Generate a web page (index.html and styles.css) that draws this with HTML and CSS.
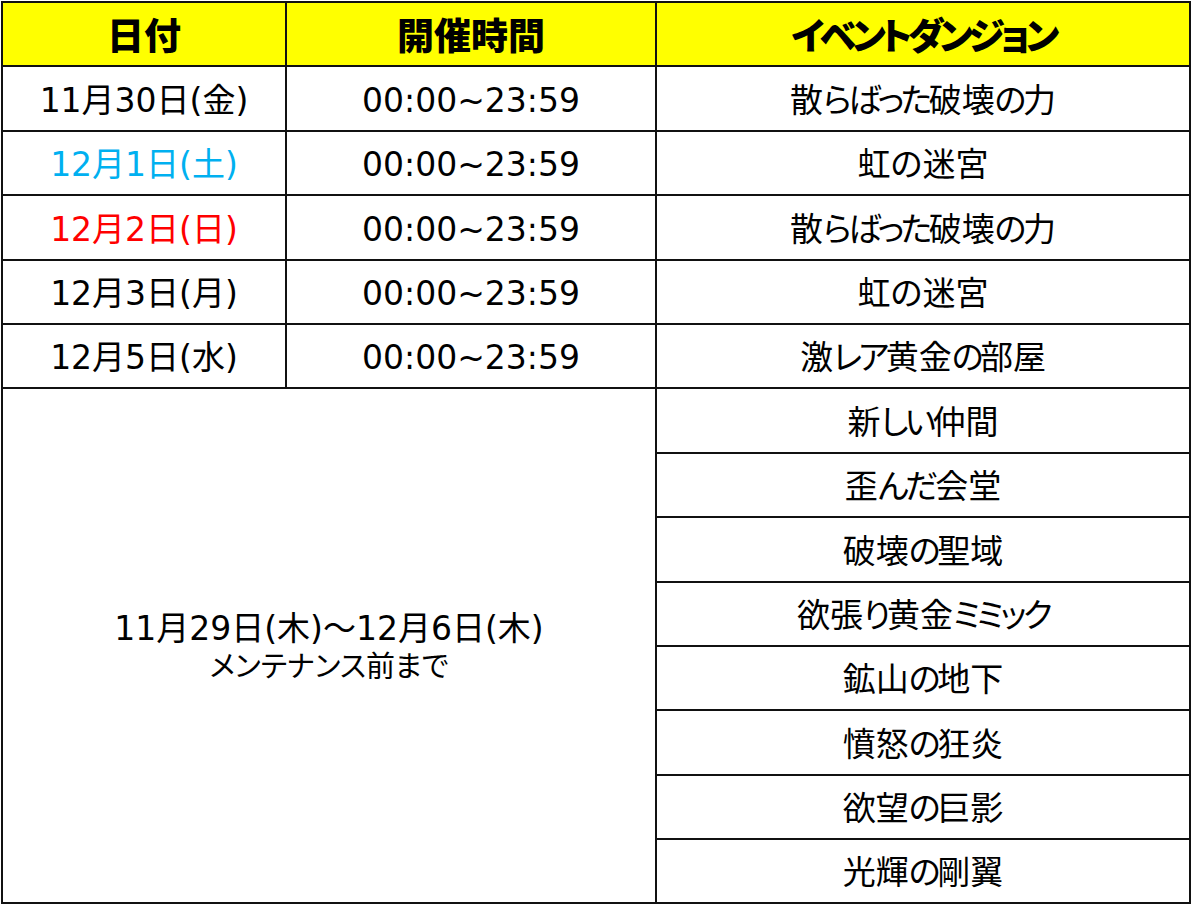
FILE: index.html
```html
<!DOCTYPE html>
<html lang="ja">
<head>
<meta charset="utf-8">
<title>イベントダンジョン スケジュール</title>
<link rel="stylesheet" href="styles.css">
</head>
<body>
<table class="schedule">
  <colgroup>
    <col class="c-date">
    <col class="c-time">
    <col class="c-event">
  </colgroup>
  <thead>
    <tr><th>日付</th><th>開催時間</th><th class="kana-head">イベントダンジョン</th></tr>
  </thead>
  <tbody>
    <tr><td>11月30日(金)</td><td>00:00~23:59</td><td>散<span class="kana">らばった</span>破壊<span class="kana">の</span>力</td></tr>
    <tr><td class="sat">12月1日(土)</td><td>00:00~23:59</td><td>虹の迷宮</td></tr>
    <tr><td class="sun">12月2日(日)</td><td>00:00~23:59</td><td>散<span class="kana">らばった</span>破壊<span class="kana">の</span>力</td></tr>
    <tr><td>12月3日(月)</td><td>00:00~23:59</td><td>虹の迷宮</td></tr>
    <tr><td>12月5日(水)</td><td>00:00~23:59</td><td>激<span class="kana">レア</span>黄金<span class="kana">の</span>部屋</td></tr>
    <tr>
      <td class="span" colspan="2" rowspan="9">
        <div class="span-main">11月29日(木)～12月6日(木)</div>
        <div class="span-sub">メンテナンス前まで</div>
      </td>
      <td>新<span class="kana">しい</span>仲間</td>
    </tr>
    <tr><td>歪<span class="kana">んだ</span>会堂</td></tr>
    <tr><td>破壊<span class="kana">の</span>聖域</td></tr>
    <tr><td>欲張<span class="kana">り</span>黄金<span class="kana">ミミック</span></td></tr>
    <tr><td>鉱山<span class="kana">の</span>地下</td></tr>
    <tr><td>憤怒<span class="kana">の</span>狂炎</td></tr>
    <tr><td>欲望<span class="kana">の</span>巨影</td></tr>
    <tr><td>光輝<span class="kana">の</span>剛翼</td></tr>
  </tbody>
</table>
</body>
</html>
```
FILE: styles.css
```css
html, body {
  margin: 0;
  padding: 0;
  background: #ffffff;
}

body {
  font-family: "DejaVu Sans", "Noto Sans CJK JP", sans-serif;
  color: #000000;
}

.schedule {
  margin: 1px 0 0 1px;
  border-collapse: collapse;
  table-layout: fixed;
  width: 1188px;
}

.c-date { width: 284px; }
.c-time { width: 370px; }
.c-event { width: 534px; }

.schedule th,
.schedule td {
  border: 2px solid #111111;
  text-align: center;
  vertical-align: middle;
  padding: 0;
  height: 62px;
  box-sizing: border-box;
  font-feature-settings: "palt";
}

.schedule tr {
  height: 64.4px;
}

.schedule th {
  background: #ffff00;
  font-family: "Noto Sans CJK JP", sans-serif;
  font-size: 37px;
  font-weight: 900;
  line-height: 1.2;
}

.schedule th.kana-head {
  letter-spacing: -4.5px;
}

.schedule td {
  font-size: 33px;
  font-weight: 400;
  line-height: 1.2;
  padding-top: 4px;
}

.kana {
  letter-spacing: -3.5px;
}

.schedule td.sat { color: #00b0f0; }
.schedule td.sun { color: #ff0000; }

.span-main {
  font-size: 33px;
  line-height: 39px;
}

.span-sub {
  font-size: 29px;
  line-height: 39px;
}
```
